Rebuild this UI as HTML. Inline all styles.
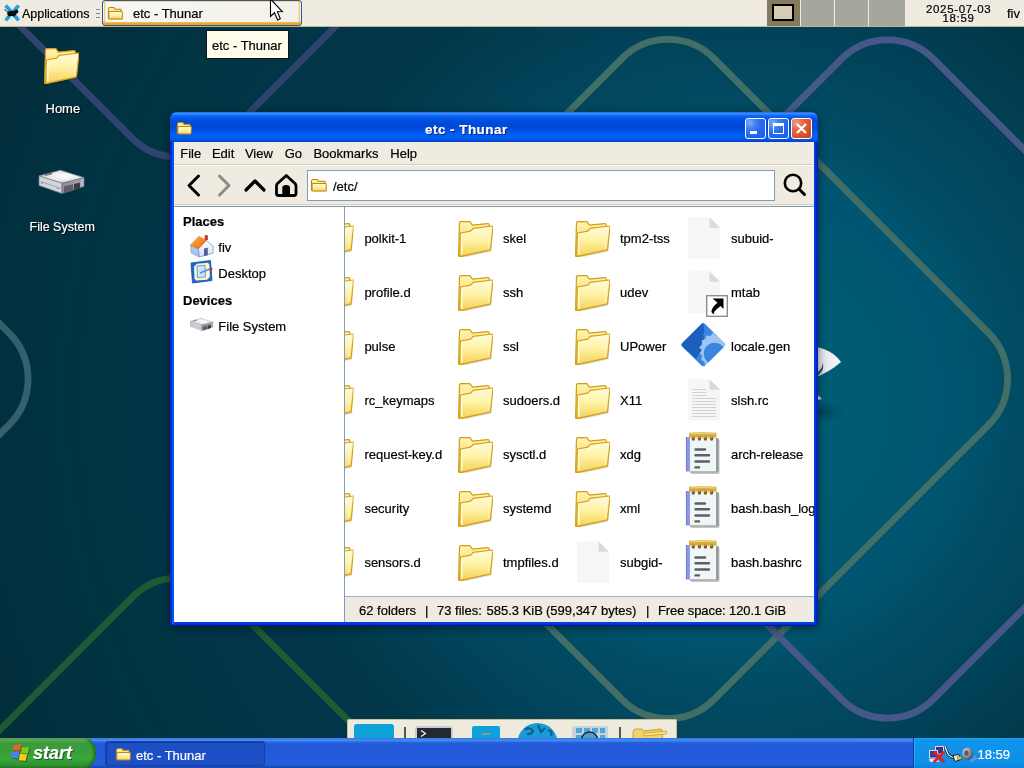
<!DOCTYPE html>
<html><head><meta charset="utf-8">
<style>
*{box-sizing:border-box}
html,body{margin:0;padding:0;width:1024px;height:768px;overflow:hidden}
body{position:relative;font-family:"Liberation Sans",sans-serif;font-size:13px;color:#000;
background:radial-gradient(circle at 730px 400px,#005e78 0,#005a72 150px,#005672 216px,#01536c 247px,#014d66 275px,#014a62 300px,#02465c 345px,#024157 380px,#023d52 415px,#023a4c 440px,#02364a 465px,#02354a 520px,#003544 618px,#032d3b 810px,#032a37 1000px)}
.a{position:absolute}
.t{position:absolute;white-space:pre;line-height:13px;font-size:13px;-webkit-text-stroke:0.2px currentColor}
.w{color:#fff}
</style></head><body>
<div id="wrap" style="position:absolute;left:0;top:0;width:1024px;height:768px;will-change:transform">
<svg class="a" style="left:0;top:0" width="1024" height="768" viewBox="0 0 1024 768">
<defs>
<linearGradient id="fgF" x1="0" y1="0" x2="0" y2="1"><stop offset="0" stop-color="#fffbe0"/><stop offset="0.45" stop-color="#fff3a6"/><stop offset="1" stop-color="#f5d25a"/></linearGradient>
<linearGradient id="fgB" x1="0" y1="0" x2="0" y2="1"><stop offset="0" stop-color="#fff5b0"/><stop offset="1" stop-color="#eec850"/></linearGradient>
<symbol id="folder" viewBox="0 0 36 36">
<path d="M4.5,13 L35.5,7.5 L34.5,30.5 L4.5,37 Z" fill="#000" opacity="0.13"/>
<path d="M2.5,2 Q2.6,0.8 4,0.7 L12.6,0.3 L15.4,4 L30.8,2.6 Q32.2,2.5 32.2,4 L33.2,29 L2.6,35.6 Q1.6,35.6 1.6,34.5 Z" fill="url(#fgB)" stroke="#d29c14" stroke-width="1.2"/>
<path d="M3.4,12 L13.6,10.1 L16.2,7.4 L35.2,5 Q36,5 35.9,6 L33.6,28 Q33.5,28.8 32.6,29 L3.6,35.3 Q2.6,35.5 2.7,34.4 Z" fill="url(#fgF)" stroke="#d6a118" stroke-width="1.2"/>
<path d="M4.6,13.2 L4.9,33.6" stroke="#fffef0" stroke-width="1.3"/>
<path d="M31.8,7 L31.2,27.5" stroke="#fff8d0" stroke-width="0.9" opacity="0.8"/>
</symbol>
<symbol id="fold16" viewBox="0 0 36 30">
<path d="M5,28 L35,28 L35,13 Z" fill="#000" opacity="0.15" transform="translate(1.5,1.5)"/>
<path d="M3,7 Q3,3 7,3 L14,3 Q16,3 17,5 L18,7 L30,7 Q32,7 32,9 L32,26 L3,26 Z" fill="url(#fgB)" stroke="#b8820e" stroke-width="2.2"/>
<path d="M6,12 L33,12 Q34.5,12 34.5,13.5 L34,26.5 Q34,28 32.5,28 L6,28 Q4.5,28 4.5,26.5 L4.5,13.5 Q4.5,12 6,12 Z" fill="url(#fgF)" stroke="#bf8a12" stroke-width="2.2"/>
<path d="M7.5,14.5 L7.5,25.5 M30.5,14.5 L30.5,25.5" stroke="#fffbe0" stroke-width="1.5"/>
</symbol>
<symbol id="file" viewBox="0 0 32 42">
<path d="M1.5,0.3 L21.5,0.3 L32,10.8 L32,40.5 Q32,41.8 30.5,41.8 L1.5,41.8 Q0,41.8 0,40.5 L0,1.8 Q0,0.3 1.5,0.3 Z" fill="#f6f6f6"/>
<path d="M21.5,0.3 L32,10.8 L23,10.8 Q21.5,10.8 21.5,9.3 Z" fill="#dadada"/>
</symbol>
<symbol id="tfile" viewBox="0 0 32 42">
<use href="#file"/>
<path d="M4.2,10.5 H18.7 M4.2,13.5 H18.7 M4.2,16.5 H18.7 M4.2,19.5 H28 M4.2,22.5 H28 M4.2,25.5 H28 M4.2,28.5 H28 M4.2,31.5 H28 M4.2,34.5 H28 M4.2,37.5 H28" stroke="#d2d2d0" stroke-width="1.1"/>
</symbol>
<linearGradient id="ntB" x1="0" y1="0" x2="1" y2="0"><stop offset="0" stop-color="#6a70d0"/><stop offset="0.5" stop-color="#9aa0ec"/><stop offset="1" stop-color="#7478d4"/></linearGradient>
<symbol id="note" viewBox="0 0 36 44">
<rect x="6.5" y="8" width="29" height="35" rx="1.5" fill="#808080" opacity="0.45"/>
<rect x="1.9" y="6" width="4.2" height="34.5" fill="url(#ntB)"/>
<rect x="5.8" y="5.5" width="26.7" height="35.1" fill="#eef6f6"/>
<rect x="32" y="7" width="2.6" height="34" fill="#8c8c90" opacity="0.8"/>
<rect x="6" y="40" width="27" height="2" fill="#a8a8ac" opacity="0.7"/>
<path d="M5,1.8 Q18,0.5 32.5,1.8 L32.5,6.5 L5,6.5 Z" fill="#d4aa3a"/>
<path d="M6,3 Q18,2 31.5,3" stroke="#f0d878" stroke-width="1.2" fill="none"/>
<g fill="#8a5c1c"><ellipse cx="9.3" cy="7.6" rx="1.7" ry="2.2"/><ellipse cx="15.5" cy="7.6" rx="1.7" ry="2.2"/><ellipse cx="21.4" cy="7.6" rx="1.7" ry="2.2"/><ellipse cx="27.6" cy="7.6" rx="1.7" ry="2.2"/></g>
<g fill="#e8e0c0"><circle cx="9" cy="6.5" r="0.6"/><circle cx="15.2" cy="6.5" r="0.6"/><circle cx="21.1" cy="6.5" r="0.6"/><circle cx="27.3" cy="6.5" r="0.6"/></g>
<path d="M11.5,18.5 H21 M11.5,24.3 H25 M11.5,30.5 H25 M11.5,36.4 H15" stroke="#5e5e66" stroke-width="2.4" stroke-linecap="round"/>
</symbol>
<clipPath id="gclip"><path d="M23,1.5 Q24.2,1.5 25,2.3 L43.7,21 Q45,22.5 43.7,24 L25,42.7 Q23,44.5 21,42.7 L2.3,24 Q1,22.5 2.3,21 L21,2.3 Q21.8,1.5 23,1.5 Z"/></clipPath>
<symbol id="gear" viewBox="0 0 46 46"><g clip-path="url(#gclip)">
<path d="M23,1.5 Q24.2,1.5 25,2.3 L43.7,21 Q45,22.5 43.7,24 L25,42.7 Q23,44.5 21,42.7 L2.3,24 Q1,22.5 2.3,21 L21,2.3 Q21.8,1.5 23,1.5 Z" fill="#3886e2"/>
<path d="M2.3,21 L21,2.3 Q21.8,1.5 23,1.5 L24,9 L23,13 L24,17 L22,21 L23.5,25 L21.5,29 L19,31 L16,36 L2.3,24 Q1,22.5 2.3,21 Z" fill="#1c60bb"/>
<path d="M43.7,24 L25,42.7 L24,39 L21,37 L22,33 L19.5,31 L21.5,27.5 L19,25 L22,22 L21.5,18.5 L25,17 L26,13.5 L30,14 L32.5,11 L35.5,13.5 L40,16 L43.7,21 Q45,22.5 43.7,24 Z" fill="#9dc5f2"/>
<circle cx="34" cy="31" r="10.5" fill="#3886e2"/>
</g>
</symbol>
<symbol id="link" viewBox="0 0 22 22">
<rect x="0.7" y="0.7" width="20.6" height="20.6" fill="#fff" stroke="#8c8c8c" stroke-width="1.4"/>
<path d="M6.5,3.5 L17.5,3.5 L17.5,14 L14.6,11 Q10,14.5 8,17 Q7.2,18.5 9,19 Q6.3,19.5 5.5,17 Q5.3,12.5 11.5,7.8 Z" fill="#000"/>
</symbol>
<linearGradient id="roofg" x1="0" y1="0" x2="1" y2="1"><stop offset="0" stop-color="#ffb040"/><stop offset="1" stop-color="#e86a10"/></linearGradient>
<linearGradient id="gabg" x1="0" y1="0" x2="0" y2="1"><stop offset="0" stop-color="#ffffff"/><stop offset="1" stop-color="#cfe0f6"/></linearGradient>
<symbol id="house" viewBox="0 0 24 24">
<path d="M14.7,1.2 L17.8,1.2 L17.8,6 L14.7,6 Z" fill="#c43020"/>
<path d="M0.6,11 L8.3,14.9 L9.4,23 L1.3,19.1 Z" fill="#a6c8f2" stroke="#7a88c8" stroke-width="0.6"/>
<path d="M8.3,14.9 L16.4,6.5 L23.1,12.1 L23.1,19.1 L9.4,23 Z" fill="url(#gabg)" stroke="#8088c4" stroke-width="0.7"/>
<path d="M0.6,11 L9,2.2 L16.4,6.5 L8.3,14.9 Z" fill="url(#roofg)" stroke="#d06010" stroke-width="0.4"/>
<path d="M14,14.5 L17.8,13.8 L17.8,21.2 L14,22.3 Z" fill="#5a5a98"/>
</symbol>
<symbol id="desk" viewBox="0 0 24 24">
<path d="M1,3 L20.5,0.5 L22,20.5 L2.5,23 Z" fill="#2068d0" stroke="#1848a8" stroke-width="0.8"/>
<path d="M4,6.5 L7,3.8 L18,2.8 L19.5,5 L19.8,17 L17,19.8 L6,20.5 L4.5,18.5 Z" fill="#fff6c8"/>
<path d="M7,6 L15,5.3 L15.5,17 L7.5,17.5 Z" fill="#cfe4fa" stroke="#4a8ad8" stroke-width="0.8"/>
<path d="M10,13 L20,9" stroke="#5090e0" stroke-width="1.6"/>
<circle cx="21" cy="9" r="1.5" fill="#d03020"/>
</symbol>
<radialGradient id="drvT" cx="0.55" cy="0.45" r="0.6"><stop offset="0" stop-color="#ffffff"/><stop offset="0.6" stop-color="#e6e6ea"/><stop offset="1" stop-color="#b4b4bc"/></radialGradient>
<linearGradient id="drvR" x1="0" y1="0" x2="1" y2="0"><stop offset="0" stop-color="#8a8a96"/><stop offset="0.8" stop-color="#a0a0b0"/><stop offset="1" stop-color="#c8c8f0"/></linearGradient>
<symbol id="drive" viewBox="0 0 52 32">
<path d="M3,10 L24.4,4.3 L48,11.7 L26,17.2 Z" fill="url(#drvT)" stroke="#9898a0" stroke-width="0.7"/>
<path d="M3,10 L26,17.2 L26,27.5 L3,19.5 Z" fill="#d4d4da" stroke="#7a7a84" stroke-width="0.7"/>
<path d="M26,17.2 L48,11.7 L48,20.5 L26,27.5 Z" fill="url(#drvR)" stroke="#6a6a74" stroke-width="0.7"/>
<path d="M28,20.5 L37,18.2 L37,24.8 L28,27 Z" fill="#5c5c66"/>
<path d="M38,18 L44,16.5 L44,22.6 L38,24.3 Z" fill="#3c3c44"/>
<path d="M9,9.3 L16,7.4" stroke="#707078" stroke-width="1.6"/>
<path d="M4.5,15.5 L25,22.3" stroke="#9a9aa2" stroke-width="0.8"/>
<circle cx="6" cy="17" r="0.7" fill="#555"/><circle cx="22" cy="22.6" r="0.7" fill="#555"/>
</symbol>
</defs>
<g fill="none" stroke-width="6.8">
<path stroke="#2f456f" d="M224.0,-502.0 L498.0,-228.0 A65,65 0 0 1 498.0,-136.0 L224.0,138.0 A65,65 0 0 1 132.0,138.0 L-142.0,-136.0 A65,65 0 0 1 -142.0,-228.0 L132.0,-502.0 A65,65 0 0 1 224.0,-502.0 Z"/>
<path stroke="#416e66" d="M714.0,58.5 L988.5,333.0 A65,65 0 0 1 988.5,425.0 L714.0,699.5 A65,65 0 0 1 622.0,699.5 L347.5,425.0 A65,65 0 0 1 347.5,333.0 L622.0,58.5 A65,65 0 0 1 714.0,58.5 Z"/>
<path stroke="#465888" d="M933.5,59.0 L1207.5,333.0 A65,65 0 0 1 1207.5,425.0 L933.5,699.0 A65,65 0 0 1 841.5,699.0 L567.5,425.0 A65,65 0 0 1 567.5,333.0 L841.5,59.0 A65,65 0 0 1 933.5,59.0 Z"/>
<path stroke="#37606f" d="M-265.0,59.0 L9.0,333.0 A65,65 0 0 1 9.0,425.0 L-265.0,699.0 A65,65 0 0 1 -357.0,699.0 L-631.0,425.0 A65,65 0 0 1 -631.0,333.0 L-357.0,59.0 A65,65 0 0 1 -265.0,59.0 Z"/>
<path stroke="#1e5b33" d="M224.7,597.0 L498.7,871.0 A65,65 0 0 1 498.7,963.0 L224.7,1237.0 A65,65 0 0 1 132.7,1237.0 L-141.3,963.0 A65,65 0 0 1 -141.3,871.0 L132.7,597.0 A65,65 0 0 1 224.7,597.0 Z"/>
</g>
<radialGradient id="blobg" cx="0.9" cy="0.4" r="1"><stop offset="0" stop-color="#f6f6f8"/><stop offset="0.6" stop-color="#e4e4ea"/><stop offset="1" stop-color="#b8bcc4"/></radialGradient>
<path d="M812,346 Q832,349 841,362 Q830,372 812,379 Z" fill="url(#blobg)"/>
<path d="M818,372 Q824,366 822,362 Q826,368 818,376 Z" fill="#1c5a70"/>
<path d="M818,395 L822,399 L818,400 Z" fill="#c8ccd0"/>
<radialGradient id="shd"><stop offset="0" stop-color="#00303f" stop-opacity="0.5"/><stop offset="1" stop-color="#00303f" stop-opacity="0"/></radialGradient><ellipse cx="822" cy="412" rx="22" ry="11" fill="url(#shd)"/>
<use href="#folder" x="43" y="48" width="36" height="36"/>
</svg>
<!-- TOP PANEL -->
<div class="a" style="left:0;top:0;width:1024px;height:27px;background:#efebe0;border-bottom:1px solid #c3b68c"></div>
<svg class="a" style="left:0;top:0" width="24" height="26" viewBox="0 0 24 26">
<path d="M6.8,6.8 L17.5,19 M17.5,6.8 L6.8,19" stroke="#1ba5e0" stroke-width="3.6" stroke-linecap="square"/>
<ellipse cx="11.8" cy="13.4" rx="4.6" ry="2.6" fill="#0a0a0a"/>
<circle cx="16.3" cy="11.6" r="2.1" fill="#0a0a0a"/>
<path d="M8.6,12.6 L4.3,9.5" stroke="#222" stroke-width="0.9"/>
<path d="M9,15 L8.2,16.5 M13.5,15.5 L14,16.8" stroke="#0a0a0a" stroke-width="1"/>
</svg>
<div class="t" style="left:22px;top:8px;font-size:12.5px">Applications</div>
<div class="a" style="left:96px;top:9px;width:4px;height:1px;background:#8c8a80"></div>
<div class="a" style="left:96px;top:13px;width:4px;height:1px;background:#8c8a80"></div>
<div class="a" style="left:96px;top:17px;width:4px;height:1px;background:#8c8a80"></div>
<div class="a" style="left:102px;top:0;width:200px;height:26px;border:1px solid #2b5890;border-radius:3px;background:linear-gradient(#fbd58a 0,#fbd58a 1px,#f8f7f2 3px,#f1efe6 20px,#f5a623 22px,#f5a623 24px)"></div>
<div class="a" style="left:104px;top:2px;width:196px;height:20px;background:linear-gradient(90deg,#f8b84a 0,#f8f7f2 2px,#f3f1e9 194px,#f8b84a 196px)"></div>
<svg class="a" style="left:107px;top:6px" width="16" height="14" viewBox="0 0 36 30" preserveAspectRatio="none"><use href="#fold16"/></svg>
<div class="t" style="left:133px;top:6.5px">etc - Thunar</div>
<div class="a" style="left:767px;top:0;width:33px;height:26px;background:#857a5c"></div>
<div class="a" style="left:772px;top:4px;width:22px;height:17px;background:#d4ceb4;border:2px solid #000"></div>
<div class="a" style="left:801px;top:0;width:33px;height:26px;background:#a5a69c"></div>
<div class="a" style="left:835px;top:0;width:33px;height:26px;background:#a5a69c"></div>
<div class="a" style="left:869px;top:0;width:36px;height:26px;background:#a5a69c"></div>
<div class="t" style="left:926px;top:4px;font-size:11.5px;line-height:11.5px;letter-spacing:0.65px">2025-07-03</div>
<div class="t" style="left:942.5px;top:13px;font-size:11.5px;line-height:11.5px;letter-spacing:0.65px">18:59</div>
<div class="t" style="left:1007px;top:6.5px">fiv</div>
<!-- TOOLTIP -->
<div class="a" style="left:206px;top:30px;width:83px;height:29px;background:#fffdec;border:1px solid #141414"></div>
<div class="t" style="left:212px;top:38.8px">etc - Thunar</div>
<!-- DESKTOP ICONS -->
<div class="t w" style="left:45.5px;top:102px;text-shadow:1px 1px 1px #000">Home</div>
<svg class="a" style="left:36px;top:166px" width="52" height="32"><use href="#drive" width="52" height="32"/></svg>
<div class="t w" style="left:29.5px;top:221px;font-size:12.5px;text-shadow:1px 1px 1px #000">File System</div>
<!-- WINDOW -->
<div class="a" style="left:170px;top:112px;width:648px;height:514px;background:linear-gradient(90deg,#0020d0 0,#0020e0 2px,#0058f4 2.5px,#0058f4 4px,#0038e0 5px,#0040e8 644px,#0030d0 646px,#0018a0 648px);border-radius:7px 7px 0 0;box-shadow:inset 1px 0 0 #0830c0,inset 0 -1px 0 #0018a0,inset 0 -2px 0 #0030d0,0 2px 10px rgba(0,0,0,0.45)"></div>
<div class="a" style="left:170px;top:112px;width:648px;height:30px;border-radius:7px 7px 0 0;background:linear-gradient(#0a58e0 0,#3a8cff 1px,#3a8cff 2px,#1a6cf8 3px,#0a5ef0 5px,#0050e0 8px,#0048d8 13px,#004cdc 16px,#0058ec 20px,#0060f6 24px,#005cf0 27px,#0048d0 29px,#0040c4 30px)"></div>
<svg class="a" style="left:176px;top:121px" width="16" height="14" viewBox="0 0 36 30" preserveAspectRatio="none"><use href="#fold16"/></svg>
<div class="t w" style="left:425px;top:122.5px;font-size:13.5px;font-weight:700;letter-spacing:0.45px;text-shadow:1px 1px 0 #0a1e6e">etc - Thunar</div>
<div class="a" style="left:745px;top:118px;width:21px;height:21px;border:1px solid #fff;border-radius:3px;background:radial-gradient(circle at 4px 4px,#7ab0ff 0,#3a80f6 6px,#2668ee 12px,#1c5ae0 22px)"></div>
<div class="a" style="left:750px;top:131px;width:7px;height:3px;background:#fff"></div>
<div class="a" style="left:768px;top:118px;width:21px;height:21px;border:1px solid #fff;border-radius:3px;background:radial-gradient(circle at 4px 4px,#7ab0ff 0,#3a80f6 6px,#2668ee 12px,#1c5ae0 22px)"></div>
<div class="a" style="left:773px;top:123px;width:11px;height:11px;border:1px solid #fff;border-top-width:3px"></div>
<div class="a" style="left:791px;top:118px;width:21px;height:21px;border:1px solid #fff;border-radius:3px;background:radial-gradient(circle at 4px 4px,#f4a088 0,#e4683f 7px,#d9502a 14px,#c43e1a 22px)"></div>
<svg class="a" style="left:795px;top:122px" width="13" height="13" viewBox="0 0 13 13"><path d="M2,2 L11,11 M11,2 L2,11" stroke="#fff" stroke-width="2.2"/></svg>
<!-- client -->
<div class="a" style="left:174px;top:142px;width:640px;height:480px;background:#efebe0"></div>
<div class="a" style="left:174px;top:164px;width:640px;height:1px;background:#d6d0bb"></div>
<div class="a" style="left:174px;top:165px;width:640px;height:1px;background:#fbfaf5"></div>
<div class="t" style="left:180.2px;top:146.8px">File</div>
<div class="t" style="left:211.9px;top:146.8px">Edit</div>
<div class="t" style="left:244.9px;top:146.8px">View</div>
<div class="t" style="left:284.7px;top:146.8px">Go</div>
<div class="t" style="left:313.4px;top:146.8px">Bookmarks</div>
<div class="t" style="left:390.3px;top:146.8px">Help</div>
<div class="a" style="left:174px;top:204px;width:640px;height:1px;background:#d8d0b8"></div>
<div class="a" style="left:174px;top:205px;width:640px;height:1px;background:#f4f2ea"></div>
<svg class="a" style="left:180px;top:168px" width="130" height="34" viewBox="180 168 130 34">
<path d="M198.5,176 L189,185.5 L198.5,195" fill="none" stroke="#000" stroke-width="3" stroke-linecap="round" stroke-linejoin="round"/>
<path d="M219.5,176 L229,185.5 L219.5,195" fill="none" stroke="#8b8c86" stroke-width="3" stroke-linecap="round" stroke-linejoin="round"/>
<path d="M246,190 L255,181 L264,190" fill="none" stroke="#000" stroke-width="3.2" stroke-linecap="round" stroke-linejoin="round"/>
<path d="M286.3,175.5 L277.5,183.5 Q276.5,184.5 276.5,186 L276.5,193.5 Q276.5,195.5 278.5,195.5 L294,195.5 Q296,195.5 296,193.5 L296,186 Q296,184.5 295,183.5 Z" fill="none" stroke="#000" stroke-width="2.8" stroke-linejoin="round"/>
<path d="M282.3,195.5 L282.3,187.5 Q282.3,185 286.2,185 Q290,185 290,187.5 L290,195.5 Z" fill="#000"/>
</svg>
<div class="a" style="left:307px;top:170px;width:468px;height:31px;background:#fff;border:1px solid #7f9db9"></div>
<svg class="a" style="left:310px;top:178px" width="17" height="14" viewBox="0 0 36 30" preserveAspectRatio="none"><use href="#fold16"/></svg>
<div class="t" style="left:333px;top:180px">/etc/</div>
<svg class="a" style="left:780px;top:170px" width="30" height="30" viewBox="780 170 30 30"><circle cx="793" cy="183" r="8.2" fill="none" stroke="#000" stroke-width="2.6"/><path d="M799,189 L804.5,194.5" stroke="#000" stroke-width="3" stroke-linecap="round"/></svg>
<!-- panes -->
<div class="a" style="left:174px;top:206px;width:640px;height:1px;background:#7f9db9"></div>
<div class="a" style="left:174px;top:207px;width:170px;height:415px;background:#fff"></div>
<div class="a" style="left:344px;top:207px;width:1px;height:415px;background:#7f9db9"></div>
<div class="a" style="left:345px;top:207px;width:469px;height:389px;background:#fff;overflow:hidden" id="iv"></div>
<div class="a" style="left:345px;top:596px;width:469px;height:1px;background:#9fb0c4"></div>
<svg class="a" style="left:345px;top:207px" width="469" height="389" viewBox="345 207 469 389">
<use href="#folder" x="317.6" y="221" width="36" height="36"/>
<use href="#folder" x="317.6" y="275" width="36" height="36"/>
<use href="#folder" x="317.6" y="329" width="36" height="36"/>
<use href="#folder" x="317.6" y="383" width="36" height="36"/>
<use href="#folder" x="317.6" y="437" width="36" height="36"/>
<use href="#folder" x="317.6" y="491" width="36" height="36"/>
<use href="#folder" x="317.6" y="545" width="36" height="36"/>
<use href="#folder" x="457" y="221" width="36" height="36"/>
<use href="#folder" x="457" y="275" width="36" height="36"/>
<use href="#folder" x="457" y="329" width="36" height="36"/>
<use href="#folder" x="457" y="383" width="36" height="36"/>
<use href="#folder" x="457" y="437" width="36" height="36"/>
<use href="#folder" x="457" y="491" width="36" height="36"/>
<use href="#folder" x="457" y="545" width="36" height="36"/>
<use href="#folder" x="574" y="221" width="36" height="36"/>
<use href="#folder" x="574" y="275" width="36" height="36"/>
<use href="#folder" x="574" y="329" width="36" height="36"/>
<use href="#folder" x="574" y="383" width="36" height="36"/>
<use href="#folder" x="574" y="437" width="36" height="36"/>
<use href="#folder" x="574" y="491" width="36" height="36"/>
<use href="#file" x="577" y="541" width="32" height="42"/>
<use href="#file" x="688" y="217" width="32" height="42"/>
<use href="#file" x="688" y="271" width="32" height="42"/>
<use href="#link" x="706" y="295" width="22" height="22"/>
<use href="#gear" x="679.5" y="321.5" width="47.5" height="47.5"/>
<use href="#tfile" x="688" y="379" width="32" height="42"/>
<use href="#note" x="684" y="431" width="36" height="44"/>
<use href="#note" x="684" y="485" width="36" height="44"/>
<use href="#note" x="684" y="539" width="36" height="44"/>
</svg>
<div class="a" style="left:345px;top:207px;width:469px;height:389px;overflow:hidden"><div class="t" style="left:19.4px;top:24.6px">polkit-1</div>
<div class="t" style="left:19.4px;top:78.6px">profile.d</div>
<div class="t" style="left:19.4px;top:132.6px">pulse</div>
<div class="t" style="left:19.4px;top:186.6px">rc_keymaps</div>
<div class="t" style="left:19.4px;top:240.6px">request-key.d</div>
<div class="t" style="left:19.4px;top:294.6px">security</div>
<div class="t" style="left:19.4px;top:348.6px">sensors.d</div>
<div class="t" style="left:158.0px;top:24.6px">skel</div>
<div class="t" style="left:158.0px;top:78.6px">ssh</div>
<div class="t" style="left:158.0px;top:132.6px">ssl</div>
<div class="t" style="left:158.0px;top:186.6px">sudoers.d</div>
<div class="t" style="left:158.0px;top:240.6px">sysctl.d</div>
<div class="t" style="left:158.0px;top:294.6px">systemd</div>
<div class="t" style="left:158.0px;top:348.6px">tmpfiles.d</div>
<div class="t" style="left:275.0px;top:24.6px">tpm2-tss</div>
<div class="t" style="left:275.0px;top:78.6px">udev</div>
<div class="t" style="left:275.0px;top:132.6px">UPower</div>
<div class="t" style="left:275.0px;top:186.6px">X11</div>
<div class="t" style="left:275.0px;top:240.6px">xdg</div>
<div class="t" style="left:275.0px;top:294.6px">xml</div>
<div class="t" style="left:275.0px;top:348.6px">subgid-</div>
<div class="t" style="left:386.0px;top:24.6px">subuid-</div>
<div class="t" style="left:386.0px;top:78.6px">mtab</div>
<div class="t" style="left:386.0px;top:132.6px">locale.gen</div>
<div class="t" style="left:386.0px;top:186.6px">slsh.rc</div>
<div class="t" style="left:386.0px;top:240.6px">arch-release</div>
<div class="t" style="left:386.0px;top:294.6px">bash.bash_logout</div>
<div class="t" style="left:386.0px;top:348.6px">bash.bashrc</div></div>
<div class="t" style="left:183px;top:215px;font-weight:700">Places</div>
<svg class="a" style="left:190px;top:234px" width="24" height="24"><use href="#house" width="24" height="24"/></svg>
<svg class="a" style="left:190px;top:260px" width="24" height="24"><use href="#desk" width="24" height="24"/></svg>
<svg class="a" style="left:189px;top:316px" width="26" height="17" viewBox="0 0 52 32" preserveAspectRatio="none"><use href="#drive" width="52" height="32"/></svg>
<div class="t" style="left:218.3px;top:240.6px">fiv</div>
<div class="t" style="left:218.3px;top:267px">Desktop</div>
<div class="t" style="left:183px;top:293.8px;font-weight:700">Devices</div>
<div class="t" style="left:218.3px;top:319.7px">File System</div>
<div class="t" style="left:359px;top:604px">62 folders</div>
<div class="t" style="left:425px;top:604px">|</div>
<div class="t" style="left:437px;top:604px">73 files:</div>
<div class="t" style="left:486.5px;top:604px">585.3 KiB</div>
<div class="t" style="left:546px;top:604px">(599,347 bytes)</div>
<div class="t" style="left:646px;top:604px">|</div>
<div class="t" style="left:658px;top:604px;letter-spacing:-0.1px">Free space: 120.1 GiB</div>
<!-- DOCK -->
<div class="a" style="left:347px;top:719px;width:330px;height:22px;background:#efebdc;border:1px solid #c9bd96;border-bottom:none;border-radius:2px 2px 0 0"></div>
<div class="a" style="left:354px;top:724px;width:40px;height:16px;background:#0ea3d8;border-radius:3px 3px 0 0"></div>
<div class="a" style="left:404px;top:727px;width:1.5px;height:12px;background:#555"></div>
<div class="a" style="left:415px;top:726px;width:38px;height:14px;background:#c8ccd0;border-radius:3px 3px 0 0"></div>
<div class="a" style="left:417px;top:728px;width:34px;height:12px;background:#22292f"></div>
<svg class="a" style="left:420px;top:729px" width="8" height="9"><path d="M1,1.5 L5.5,4.5 L1,7.5" fill="none" stroke="#fff" stroke-width="1.2"/></svg>
<div class="a" style="left:472px;top:726px;width:28px;height:14px;background:#0ea3d8;border-radius:2px 2px 0 0"></div>
<div class="a" style="left:482px;top:733px;width:8px;height:2px;background:#8a96a0"></div>
<svg class="a" style="left:515px;top:722px" width="46" height="18" viewBox="0 0 46 18">
<circle cx="22.5" cy="21" r="20" fill="#1c9ad6"/>
<path d="M10,8 Q14,4 18,9 Q16,13 12,12 M23,3 L26,10 L30,6 M33,8 Q38,9 36,14" fill="none" stroke="#0d5e8e" stroke-width="2.2"/>
</svg>
<div class="a" style="left:572px;top:726px;width:36px;height:14px;background:#c8d4dc;border-radius:2px 2px 0 0"></div>
<svg class="a" style="left:573px;top:727px" width="34" height="13" viewBox="0 0 34 13">
<rect x="3" y="1" width="6" height="5" fill="#4aa8e0"/><rect x="11" y="1" width="6" height="5" fill="#4aa8e0"/><rect x="19" y="1" width="6" height="5" fill="#4aa8e0"/><rect x="27" y="1" width="5" height="5" fill="#4aa8e0"/>
<rect x="3" y="8" width="6" height="5" fill="#4aa8e0"/><rect x="27" y="8" width="5" height="5" fill="#4aa8e0"/>
<circle cx="16.5" cy="13" r="8" fill="#4aa0d0" stroke="#222" stroke-width="1.5"/>
</svg>
<div class="a" style="left:619px;top:727px;width:1.5px;height:12px;background:#555"></div>
<svg class="a" style="left:630px;top:727px" width="38" height="13" viewBox="0 0 38 13">
<path d="M3,6 Q3,2 6,2 L12,2 L14,4 L30,2 Q33,2 32,6 L33,14 L3,14 Z" fill="#f2d36a" stroke="#c8a030" stroke-width="1"/>
<path d="M14,6 L36,4 Q38,5 36,7 L14,9 Z" fill="#f6e08a" stroke="#c8a030" stroke-width="0.8"/>
</svg>
<!-- TASKBAR -->
<div class="a" style="left:0;top:738px;width:1024px;height:30px;background:linear-gradient(#3a7ae8 0,#3a7ae8 1px,#4090f0 2px,#3c88ee 3px,#2a68e0 4px,#2258d8 6px,#215cdb 20px,#2060da 27px,#1a4cbc 28.5px,#1a46b0 30px)"></div>
<div class="a" style="left:0;top:738px;width:96px;height:30px;border-radius:0 11px 11px 0/0 15px 15px 0;background:linear-gradient(#7cba7c 0,#5aaa5a 2px,#3c9a3c 5px,#38a038 14px,#3aa83a 20px,#329632 26px,#2a802a 30px);box-shadow:inset -2px 0 3px #1c6a1c"></div>
<svg class="a" style="left:8px;top:742px" width="24" height="22" viewBox="8 742 24 22">
<g opacity="0.35" transform="translate(1,1)"><path d="M12.3,750.2 Q13,747 14.5,745.1 Q18,744 21.6,744.7 L19.9,750.8 Q16,750 12.3,750.2 Z M21.9,746.8 Q25.5,747.8 29.1,747.1 L28.1,753.2 Q24.5,753.8 20.9,752.9 Z M12.1,751.9 Q16,751 19.6,751.5 L18.2,759 Q14.5,758 10.4,757.6 Z M19.9,753.6 Q23.5,754.5 27,753.9 L25.7,760.7 Q22,761 18.9,760 Z" fill="#000"/></g>
<path d="M12.3,750.2 Q13,747 14.5,745.1 Q18,744 21.6,744.7 L19.9,750.8 Q16,750 12.3,750.2 Z" fill="#f25f1c"/>
<path d="M21.9,746.8 Q25.5,747.8 29.1,747.1 L28.1,753.2 Q24.5,753.8 20.9,752.9 Z" fill="#86c81c"/>
<path d="M12.1,751.9 Q16,751 19.6,751.5 L18.2,759 Q14.5,758 10.4,757.6 Z" fill="#4a7ff0"/>
<path d="M19.9,753.6 Q23.5,754.5 27,753.9 L25.7,760.7 Q22,761 18.9,760 Z" fill="#ffca14"/>
</svg>
<div class="t w" style="left:33px;top:743.5px;font-size:18px;line-height:18px;font-weight:700;font-style:italic;text-shadow:1px 1px 1px #1a4a1a">start</div>
<div class="a" style="left:105px;top:741px;width:160px;height:25px;background:#1d4fc6;border:1px solid #1840a8;border-radius:3px;box-shadow:inset 1px 1px 1px #163c9c"></div>
<svg class="a" style="left:115px;top:747px" width="16" height="14" viewBox="0 0 36 30" preserveAspectRatio="none"><use href="#fold16"/></svg>
<div class="t w" style="left:136px;top:749px">etc - Thunar</div>
<div class="a" style="left:913px;top:738px;width:111px;height:30px;background:linear-gradient(#18a8f4 0,#0f94ec 2px,#0f8fe8 25px,#0d84da 30px);border-left:1px solid #0a3c9a;box-shadow:inset 1px 0 0 #19b0f8"></div>
<svg class="a" style="left:928px;top:745px" width="50" height="18" viewBox="928 745 50 18">
<rect x="935.5" y="746.5" width="8" height="7.5" fill="#34348c" stroke="#d8d8e8" stroke-width="1"/>
<rect x="929.5" y="750.5" width="8" height="7.5" fill="#3a3a94" stroke="#d8d8e8" stroke-width="1"/>
<path d="M929,759 L938,759 L939,762 L930,762 Z" fill="#dcdcec"/>
<path d="M934.5,752.5 L943.5,761.5 M943.5,752.5 L934.5,761.5" stroke="#e41c1c" stroke-width="2.6" stroke-linecap="round"/>
<path d="M945,746 Q946,750 948,754 Q950,757 955,758" fill="none" stroke="#111" stroke-width="2.6"/>
<path d="M945,746 Q946,750 948,754 Q950,757 955,758" fill="none" stroke="#f4f4f4" stroke-width="1.3"/>
<path d="M953,755.5 L959,754.5 L961,759.5 L955,761.5 Z" fill="#f0f0f0" stroke="#111" stroke-width="0.9"/>
<path d="M957,757 L961,756 L962,759 L958,760 Z" fill="#e8d020" stroke="#333" stroke-width="0.5"/>
<radialGradient id="spk" cx="0.35" cy="0.35" r="0.7"><stop offset="0" stop-color="#e4e4e8"/><stop offset="0.5" stop-color="#9a9aa2"/><stop offset="1" stop-color="#4a4a52"/></radialGradient>
<ellipse cx="967.5" cy="753.5" rx="5.5" ry="6.3" fill="url(#spk)"/>
<ellipse cx="966.5" cy="753" rx="2.2" ry="2.8" fill="#5a5a62"/>
<path d="M970,761.5 L976,756 M972,762 L977,758" stroke="#b8b8f0" stroke-width="0.7"/>
</svg>
<div class="t w" style="left:977.5px;top:748px">18:59</div>
<!-- CURSOR -->
<svg class="a" style="left:268px;top:-2px" width="18" height="26" viewBox="268 -2 18 26">
<path d="M270.5,-1 L270.5,16.5 L274.5,12.8 L277.6,20 L280.3,18.8 L277.4,11.8 L282.3,11.5 Z" fill="#fff" stroke="#000" stroke-width="1.1" stroke-linejoin="miter"/>
</svg>
</div>
</body></html>
